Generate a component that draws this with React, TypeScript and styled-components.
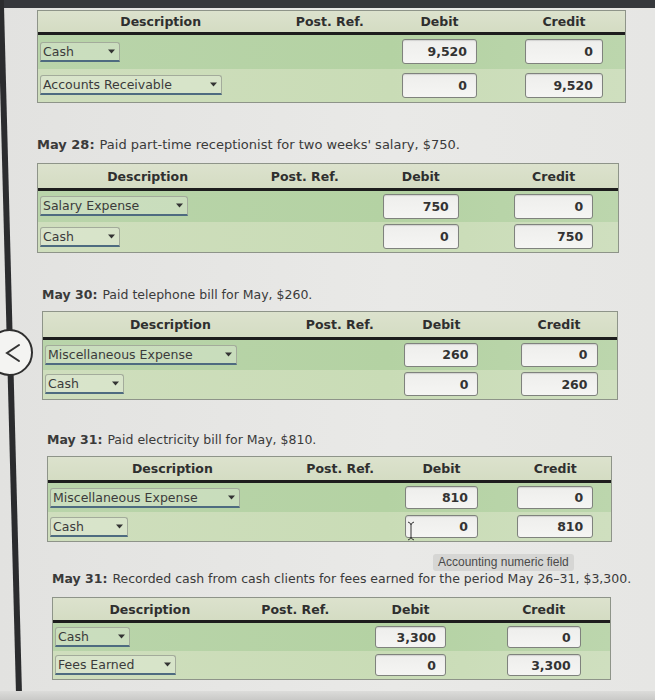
import React from "react";
import styled, { createGlobalStyle } from "styled-components";

type Entry = { account: string; selectW: number; debit: string; credit: string };

type Journal = {
  date?: string;
  text?: string;
  textSize?: number;
  indent: number;
  width: number;
  cols: string;
  headH: number;
  rowH: number;
  inputW: number;
  inputH: number;
  captionGap: number;
  tableGap: number;
  rows: Entry[];
  tooltip?: boolean;
};

const journals: Journal[] = [
  {
    indent: 7,
    width: 589,
    cols: "41.8% 15.8% 21.6% 20.8%",
    headH: 24,
    rowH: 33.5,
    inputW: 75,
    inputH: 25,
    captionGap: 0,
    tableGap: 2,
    rows: [
      { account: "Cash", selectW: 80, debit: "9,520", credit: "0" },
      { account: "Accounts Receivable", selectW: 182, debit: "0", credit: "9,520" },
    ],
  },
  {
    date: "May 28:",
    text: "Paid part-time receptionist for two weeks' salary, $750.",
    textSize: 13,
    indent: 7,
    width: 582,
    cols: "37.8% 16.4% 23.6% 22.2%",
    headH: 27,
    rowH: 30.5,
    inputW: 76,
    inputH: 25,
    captionGap: 33,
    tableGap: 9,
    rows: [
      { account: "Salary Expense", selectW: 148, debit: "750", credit: "0" },
      { account: "Cash", selectW: 80, debit: "0", credit: "750" },
    ],
  },
  {
    date: "May 30:",
    text: "Paid telephone bill for May, $260.",
    indent: 12,
    width: 576,
    cols: "44.4% 14.6% 20.8% 20.2%",
    headH: 28,
    rowH: 29.5,
    inputW: 74,
    inputH: 24,
    captionGap: 33,
    tableGap: 7,
    rows: [
      { account: "Miscellaneous Expense", selectW: 192, debit: "260", credit: "0" },
      { account: "Cash", selectW: 79, debit: "0", credit: "260" },
    ],
  },
  {
    date: "May 31:",
    text: "Paid electricity bill for May, $810.",
    indent: 17,
    width: 565,
    cols: "44.2% 15.4% 20.6% 19.8%",
    headH: 26,
    rowH: 29,
    inputW: 73,
    inputH: 23,
    captionGap: 31,
    tableGap: 7,
    tooltip: true,
    rows: [
      { account: "Miscellaneous Expense", selectW: 190, debit: "810", credit: "0" },
      { account: "Cash", selectW: 78, debit: "0", credit: "810" },
    ],
  },
  {
    date: "May 31:",
    text: "Recorded cash from cash clients for fees earned for the period May 26\u201331, $3,300.",
    indent: 22,
    width: 559,
    cols: "34.8% 17.4% 24% 23.8%",
    headH: 25,
    rowH: 28,
    inputW: 71,
    inputH: 22,
    captionGap: 28,
    tableGap: 9,
    rows: [
      { account: "Cash", selectW: 75, debit: "3,300", credit: "0" },
      { account: "Fees Earned", selectW: 121, debit: "0", credit: "3,300" },
    ],
  },
];

const GlobalStyle = createGlobalStyle`
  *, *::before, *::after {
    box-sizing: border-box;
  }
  html, body {
    margin: 0;
    padding: 0;
    background: #e6e6e4;
  }
  body {
    font-family: "DejaVu Sans", Verdana, sans-serif;
    color: #333;
  }
`;

const Screen = styled.div`
  position: relative;
  width: 655px;
  height: 700px;
  overflow: hidden;
  background: linear-gradient(90deg, #e2e2e0 0%, #e9e9e7 60%, #e6e6e4 100%);
`;

const Bezel = styled.div`
  height: 8px;
  background: #36383c;
`;

const Frame = styled.div`
  display: grid;
  grid-template-columns: 30px 1fr;
`;

const Side = styled.div`
  display: flex;
`;

const Stripe = styled.div`
  margin-left: 7px;
  width: 6px;
  height: 700px;
  margin-top: -8px;
  background: #2b2c2e;
  transform: skewX(1.5deg);
`;

const Content = styled.div`
  display: flex;
  flex-direction: column;
`;

const Section = styled.section<{ $indent: number; $width: number }>`
  position: relative;
  margin-left: ${(p) => p.$indent}px;
  width: ${(p) => p.$width}px;
`;

const Caption = styled.p<{ $gap: number; $size: number }>`
  margin: ${(p) => p.$gap}px 0 0 0;
  font-size: ${(p) => p.$size}px;
  line-height: 18px;
  color: #3a3a3a;
  white-space: nowrap;

  b {
    font-weight: bold;
    margin-right: 5px;
  }
`;

const Table = styled.div<{ $gap: number }>`
  margin-top: ${(p) => p.$gap}px;
  border: 1px solid #8e9489;
  background: #cbdcb9;
`;

const Row = styled.div<{ $cols: string; $h: number; $tone: "head" | "dark" | "light" }>`
  display: grid;
  grid-template-columns: ${(p) => p.$cols};
  height: ${(p) => p.$h}px;
  align-items: center;
  background: ${(p) =>
    p.$tone === "head"
      ? "linear-gradient(180deg, #dce2cd, #d4dcc3)"
      : p.$tone === "dark"
      ? "linear-gradient(90deg, #b9d4aa, #b4d2a3 60%, #bcd6ad)"
      : "linear-gradient(90deg, #cfdebd, #c9dcb6 60%, #cfdfbf)"};
  border-bottom: ${(p) => (p.$tone === "head" ? "3px solid #1d1d1d" : "none")};
`;

const HeadCell = styled.div`
  text-align: center;
  font-size: 12.5px;
  font-weight: bold;
  color: #2f2f2f;
`;

const Cell = styled.div<{ $center?: boolean }>`
  display: flex;
  align-items: center;
  justify-content: ${(p) => (p.$center ? "center" : "flex-start")};
  padding-left: ${(p) => (p.$center ? 0 : 2)}px;
  position: relative;
`;

const Select = styled.div<{ $w: number }>`
  display: flex;
  align-items: center;
  justify-content: space-between;
  width: ${(p) => p.$w}px;
  height: 20px;
  padding: 0 4px 0 2px;
  border: 1px solid #a3ab9b;
  border-bottom: 2px solid #4e6b80;
  border-radius: 3px 3px 0 0;
  background: rgba(236, 240, 228, 0.35);
  font-size: 12.5px;
  color: #3b3b3b;
  white-space: nowrap;
`;

const Arrow = styled.svg`
  width: 7px;
  height: 5px;
  flex: none;
`;

const Amount = styled.div<{ $w: number; $h: number }>`
  width: ${(p) => p.$w}px;
  height: ${(p) => p.$h}px;
  padding: 0 9px;
  border: 1px solid #7f827d;
  border-radius: 3px;
  background: linear-gradient(180deg, #eeeeec, #f5f5f3);
  box-shadow: inset 0 1px 1px rgba(0, 0, 0, 0.12);
  display: flex;
  align-items: center;
  justify-content: flex-end;
  font-size: 12.5px;
  font-weight: bold;
  color: #333;
`;

const BackButton = styled.div`
  position: absolute;
  left: -14px;
  top: 329px;
  width: 47px;
  height: 47px;
  border-radius: 50%;
  border: 2px solid #2f2f2f;
  background: #f4f4f2;
  display: flex;
  align-items: center;
  justify-content: center;
  padding-left: 6px;
  z-index: 2;
`;

const Tooltip = styled.div`
  position: absolute;
  left: 386px;
  bottom: -29px;
  padding: 1px 5px;
  border-radius: 3px;
  background: #d6d6d4;
  font-family: "Liberation Sans", Arial, sans-serif;
  font-size: 12px;
  line-height: 15px;
  color: #4a4a4a;
  white-space: nowrap;
  z-index: 2;
`;

const Cursor = styled.svg`
  position: absolute;
  left: 22px;
  top: 5px;
  width: 10px;
  height: 22px;
`;

const BottomEdge = styled.div`
  position: absolute;
  left: 0;
  right: 0;
  bottom: 0;
  height: 9px;
  background: linear-gradient(180deg, #dcdcda, #c9c9c7);
`;

const DropArrow = () => (
  <Arrow viewBox="0 0 7 5">
    <path d="M0 0.5 L7 0.5 L3.5 4.5 Z" fill="#333" />
  </Arrow>
);

const JournalTable = ({ j }: { j: Journal }) => (
  <Section $indent={j.indent} $width={j.width}>
    {j.date && (
      <Caption $gap={j.captionGap} $size={j.textSize ?? 12.5}>
        <b>{j.date}</b>
        {j.text}
      </Caption>
    )}
    <Table $gap={j.tableGap}>
      <Row $cols={j.cols} $h={j.headH} $tone="head">
        <HeadCell>Description</HeadCell>
        <HeadCell>Post. Ref.</HeadCell>
        <HeadCell>Debit</HeadCell>
        <HeadCell>Credit</HeadCell>
      </Row>
      {j.rows.map((r, i) => (
        <Row key={r.account + i} $cols={j.cols} $h={j.rowH} $tone={i === 0 ? "dark" : "light"}>
          <Cell>
            <Select $w={r.selectW}>
              {r.account}
              <DropArrow />
            </Select>
          </Cell>
          <Cell />
          <Cell $center>
            <Amount $w={j.inputW} $h={j.inputH}>{r.debit}</Amount>
            {j.tooltip && i === 1 && (
              <Cursor viewBox="0 0 10 22">
                <path
                  d="M2 2 Q5 3 5 5 L5 17 Q5 19 2 20 M8 2 Q5 3 5 5 M5 17 Q5 19 8 20"
                  stroke="#333"
                  strokeWidth="1"
                  fill="none"
                />
              </Cursor>
            )}
          </Cell>
          <Cell $center>
            <Amount $w={j.inputW + 3} $h={j.inputH}>{r.credit}</Amount>
          </Cell>
        </Row>
      ))}
    </Table>
    {j.tooltip && <Tooltip>Accounting numeric field</Tooltip>}
  </Section>
);

const App = () => {
  return (
    <Screen>
      <GlobalStyle />
      <Bezel />
      <Frame>
        <Side>
          <Stripe />
        </Side>
        <Content>
          {journals.map((j, i) => (
            <JournalTable key={i} j={j} />
          ))}
        </Content>
      </Frame>
      <BackButton>
        <svg width="16" height="20" viewBox="0 0 16 20">
          <path d="M14 2 L2 10 L14 18" stroke="#333" strokeWidth="2" fill="none" strokeLinecap="round" />
        </svg>
      </BackButton>
      <BottomEdge />
    </Screen>
  );
};

export default App;
